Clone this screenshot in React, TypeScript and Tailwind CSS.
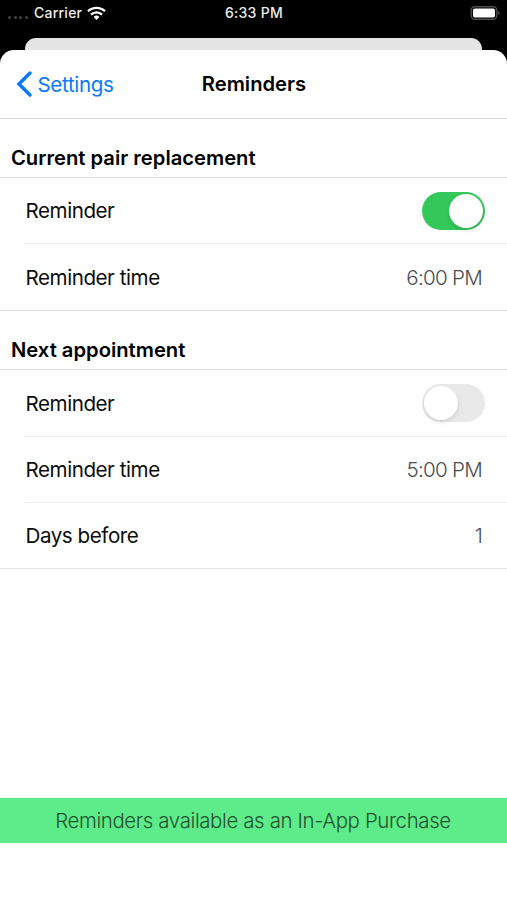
import React, { useState } from 'react';

interface SwitchProps {
  on: boolean;
  label: string;
  onToggle: () => void;
}

const Switch: React.FC<SwitchProps> = ({ on, label, onToggle }) => (
  <button
    role="switch"
    aria-checked={on}
    aria-label={label}
    onClick={onToggle}
    className={`flex h-[38px] w-[63px] items-center rounded-full p-[2px] ${on ? 'justify-end bg-[#34c759]' : 'justify-start bg-[#e9e9ea]'}`}
  >
    <span className="h-[34px] w-[34px] rounded-full bg-white shadow-[0_2px_4px_rgba(0,0,0,0.12)]" />
  </button>
);

const Row: React.FC<{ label: string; last?: boolean; children: React.ReactNode }> = ({ label, last, children }) => (
  <div className={last ? '' : 'pl-[25px]'}>
    <div className={`flex h-[66.4px] items-center justify-between border-b pr-[22px] ${last ? 'border-[#e3e3e4] pl-[25.5px]' : 'border-[#ececed] pl-[0.5px]'}`}>
      <span className="pt-[2px] text-[20.6px] tracking-[-0.45px] text-[#0c0c0c]">{label}</span>
      {children}
    </div>
  </div>
);

const Value: React.FC<{ children: React.ReactNode }> = ({ children }) => (
  <span className="pt-[2px] pr-[3px] text-[20.6px] font-light tracking-[-0.75px] text-[#4c4c4e]">{children}</span>
);

const App: React.FC = () => {
  const [pairReminder, setPairReminder] = useState(true);
  const [appointmentReminder, setAppointmentReminder] = useState(false);

  return (
    <div className="flex h-[900px] w-[507px] flex-col overflow-hidden bg-black font-['Inter','Liberation_Sans',sans-serif] text-black">
      {/* Status bar */}
      <div className="grid h-[38px] shrink-0 grid-cols-3 items-start px-[7px] pt-[3px] text-[14px] leading-[20px] font-medium text-[#ececec]">
        <div className="flex h-[20px] items-center">
          <div className="mt-[8px] ml-[1px] flex gap-[2.7px]">
            {[0, 1, 2, 3].map((dot) => (
              <span key={dot} className="h-[3px] w-[3px] rounded-full bg-[#444]" />
            ))}
          </div>
          <span className="ml-[5.9px] tracking-[0.25px]">Carrier</span>
          <svg width="19" height="14" viewBox="0 0 19 14" className="ml-[5px]" fill="none" stroke="white" strokeWidth="2.3">
            <path d="M1 5.3a12.2 12.2 0 0 1 17 0M4 8.6a7.8 7.8 0 0 1 11 0" />
            <path d="M6.6 10.9a4.3 4.3 0 0 1 5.8 0l-2.9 3z" fill="white" stroke="none" />
          </svg>
        </div>
        <span className="pl-[1px] text-center tracking-[0.3px]">6:33 PM</span>
        <div className="flex h-[20px] items-center justify-end">
          <svg width="30" height="14" viewBox="0 0 30 14" fill="none">
            <rect x="1.2" y="0.7" width="25.6" height="12.6" rx="3.5" stroke="#4e4e52" strokeWidth="1.4" />
            <rect x="3" y="2.4" width="22" height="9.2" rx="1.8" fill="white" />
            <path d="M28.3 5c1.7.8 1.7 3.2 0 4z" fill="#66666a" />
          </svg>
        </div>
      </div>

      {/* Edge of the sheet underneath */}
      <div className="mx-[25px] h-[12px] shrink-0 rounded-t-[11px] bg-[#e5e5e5]" />

      <main className="flex flex-1 flex-col rounded-t-[14px] bg-white">
        <header className="grid h-[69px] grid-cols-3 items-center border-b border-[#dadadb] px-[16px]">
          <button className="flex items-center gap-[4.5px] text-[20.6px] tracking-[-0.35px] text-[#087aff]">
            <svg width="17" height="28" viewBox="0 0 17 28" fill="none" stroke="currentColor" strokeWidth="3.5" strokeLinecap="round">
              <path d="M14 3 3 14l11 11" />
            </svg>
            <span className="pt-[2px]">Settings</span>
          </button>
          <h1 className="pt-[1px] pl-[1px] text-center text-[20.2px] font-semibold">Reminders</h1>
        </header>

        <section>
          <h2 className="flex h-[59px] items-end border-b border-[#e3e3e4] pb-[3.5px] pl-[11px] text-[20.2px] font-semibold">Current pair replacement</h2>
          <Row label="Reminder">
            <Switch on={pairReminder} label="Current pair reminder" onToggle={() => setPairReminder(!pairReminder)} />
          </Row>
          <Row label="Reminder time" last>
            <Value>6:00 PM</Value>
          </Row>
        </section>

        <section>
          <h2 className="flex h-[59.5px] items-end border-b border-[#e3e3e4] pb-[3.5px] pl-[11px] text-[20.2px] font-semibold">Next appointment</h2>
          <Row label="Reminder">
            <Switch on={appointmentReminder} label="Next appointment reminder" onToggle={() => setAppointmentReminder(!appointmentReminder)} />
          </Row>
          <Row label="Reminder time">
            <Value>5:00 PM</Value>
          </Row>
          <Row label="Days before" last>
            <Value>1</Value>
          </Row>
        </section>

        <footer className="mt-auto mb-[57px] flex h-[45px] items-center justify-center bg-[#5eeb8a] pt-[1px] pr-[1px] text-[20.4px] font-light tracking-[-0.36px] text-[#22522f]">
          Reminders available as an In-App Purchase
        </footer>
      </main>
    </div>
  );
};

export default App;
